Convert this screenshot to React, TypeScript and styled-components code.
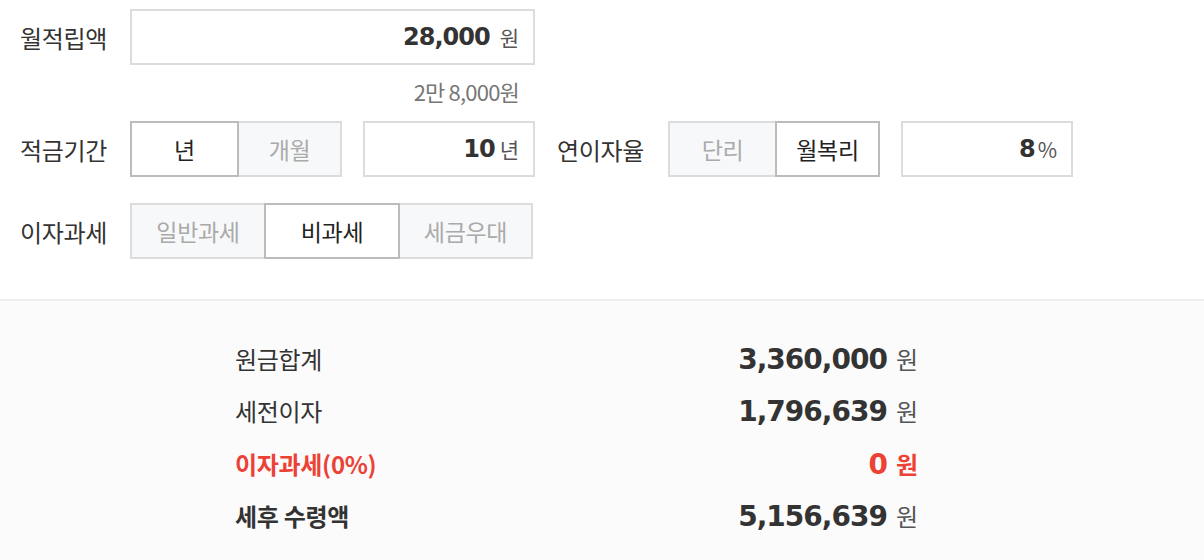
import styled, { createGlobalStyle } from 'styled-components';

const textColor = '#333';
const mutedText = '#aaa';
const lineColor = '#dcdcdc';
const activeLine = '#bcbcbc';
const redText = '#ec4135';

const GlobalStyle = createGlobalStyle`
  body {
    margin: 0;
    background: #fff;
    font-family: 'Noto Sans CJK KR', 'Noto Sans', sans-serif;
    color: ${textColor};
  }
`;

const Form = styled.section`
  padding: 9px 0 40px 20px;
  border-bottom: 2px solid #efefef;
`;

const Row = styled.div<{ $gap?: number }>`
  display: flex;
  align-items: center;
  height: 56px;
  margin-bottom: ${(p) => (p.$gap ? `${p.$gap}px` : '0')};
`;

const Label = styled.div<{ $indent?: number }>`
  flex: none;
  width: ${(p) => (p.$indent ? '111px' : '110px')};
  margin-left: ${(p) => (p.$indent ? `${p.$indent}px` : '0')};
  font-size: 24px;
  letter-spacing: -0.3px;
  color: ${textColor};
`;

const InputBox = styled.div<{ $width: number; $offset?: number }>`
  box-sizing: border-box;
  display: flex;
  align-items: center;
  justify-content: flex-end;
  width: ${(p) => p.$width}px;
  height: 56px;
  margin-left: ${(p) => (p.$offset ? `${p.$offset}px` : '0')};
  padding-right: 14px;
  border: 2px solid ${lineColor};
  background: #fff;
`;

const Amount = styled.span`
  font-family: 'DejaVu Sans', sans-serif;
  font-weight: 700;
  font-size: 24px;
  letter-spacing: -1px;
  color: ${textColor};
`;

const Unit = styled.span<{ $space?: number }>`
  margin-left: ${(p) => (p.$space !== undefined ? p.$space : 10)}px;
  font-size: 21px;
  color: #555;
`;

const Helper = styled.div`
  width: 499px;
  padding: 14px 0 18px;
  line-height: 24px;
  text-align: right;
  font-size: 22px;
  letter-spacing: -0.8px;
  color: #777;
`;

const Segments = styled.div`
  display: flex;
`;

const Segment = styled.button<{ $active?: boolean; $width: number }>`
  box-sizing: border-box;
  position: relative;
  width: ${(p) => p.$width}px;
  height: 56px;
  margin: 0;
  padding: 0;
  font-family: inherit;
  font-size: 23px;
  letter-spacing: -0.3px;
  cursor: pointer;
  border: 2px solid ${(p) => (p.$active ? activeLine : lineColor)};
  background: ${(p) => (p.$active ? '#fff' : '#f7f8f9')};
  color: ${(p) => (p.$active ? '#222' : mutedText)};
  z-index: ${(p) => (p.$active ? 1 : 0)};
  & + & {
    margin-left: -2px;
  }
`;

const Results = styled.section`
  background: #fbfbfb;
  padding: 31px 0 30px 235px;
  min-height: 200px;
`;

const ResultRow = styled.div<{ $tone?: 'red' | 'bold' }>`
  display: flex;
  align-items: center;
  justify-content: space-between;
  width: 683px;
  height: 52.5px;
  color: ${(p) => (p.$tone === 'red' ? redText : textColor)};
  font-weight: ${(p) => (p.$tone ? 700 : 400)};
`;

const ResultLabel = styled.div`
  font-size: 24px;
  letter-spacing: -0.3px;
`;

const ResultValue = styled.div`
  display: flex;
  align-items: baseline;
`;

const Figure = styled.span`
  font-family: 'DejaVu Sans', sans-serif;
  font-weight: 700;
  font-size: 28px;
  letter-spacing: -1px;
`;

const Won = styled.span<{ $red?: boolean }>`
  margin-left: 9px;
  font-size: 24px;
  font-weight: ${(p) => (p.$red ? 700 : 400)};
  color: ${(p) => (p.$red ? redText : '#555')};
`;

const results = [
  { label: '원금합계', value: '3,360,000' },
  { label: '세전이자', value: '1,796,639' },
  { label: '이자과세(0%)', value: '0', tone: 'red' as const },
  { label: '세후 수령액', value: '5,156,639', tone: 'bold' as const },
];

function App() {
  return (
    <>
      <GlobalStyle />
      <Form>
        <Row>
          <Label>월적립액</Label>
          <InputBox $width={405}>
            <Amount>28,000</Amount>
            <Unit>원</Unit>
          </InputBox>
        </Row>
        <Helper>2만 8,000원</Helper>

        <Row $gap={26}>
          <Label>적금기간</Label>
          <Segments>
            <Segment $active $width={109}>년</Segment>
            <Segment $width={105}>개월</Segment>
          </Segments>
          <InputBox $width={172} $offset={21}>
            <Amount>10</Amount>
            <Unit $space={5}>년</Unit>
          </InputBox>
          <Label $indent={22}>연이자율</Label>
          <Segments>
            <Segment $width={109}>단리</Segment>
            <Segment $active $width={105}>월복리</Segment>
          </Segments>
          <InputBox $width={172} $offset={21}>
            <Amount>8</Amount>
            <Unit $space={3}>%</Unit>
          </InputBox>
        </Row>

        <Row>
          <Label>이자과세</Label>
          <Segments>
            <Segment $width={136}>일반과세</Segment>
            <Segment $active $width={136}>비과세</Segment>
            <Segment $width={135}>세금우대</Segment>
          </Segments>
        </Row>
      </Form>

      <Results>
        {results.map((r) => (
          <ResultRow key={r.label} $tone={r.tone}>
            <ResultLabel>{r.label}</ResultLabel>
            <ResultValue>
              <Figure>{r.value}</Figure>
              <Won $red={r.tone === 'red'}>원</Won>
            </ResultValue>
          </ResultRow>
        ))}
      </Results>
    </>
  );
}

export default App;
